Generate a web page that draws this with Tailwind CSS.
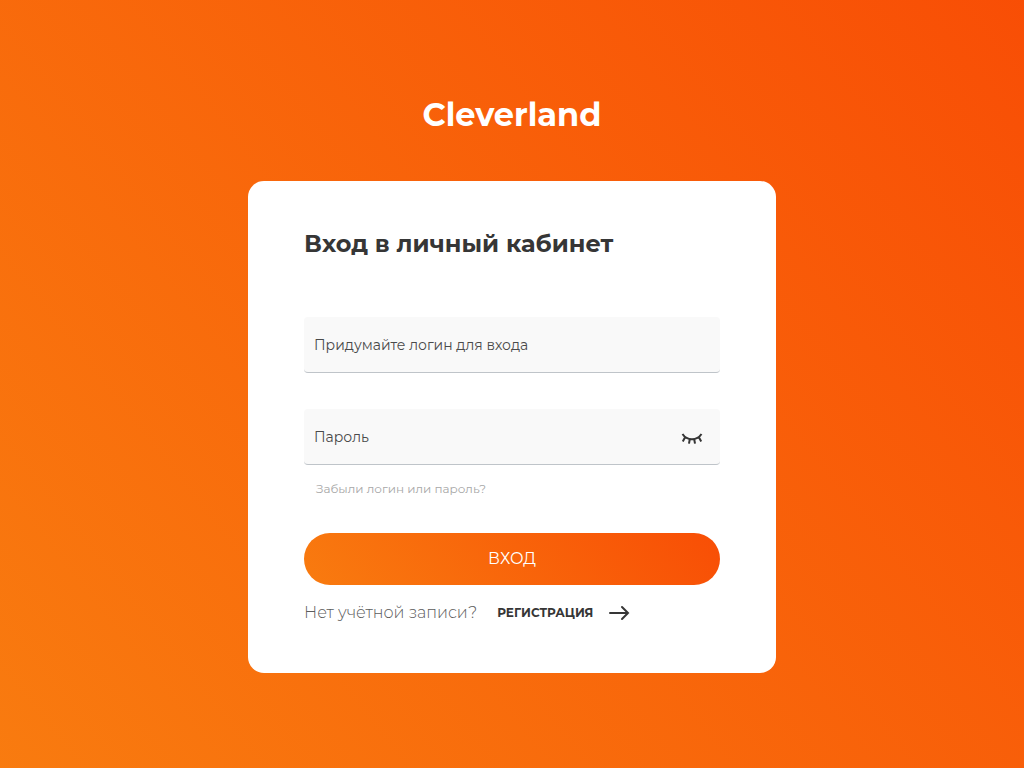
<!DOCTYPE html>
<html lang="ru">
<head>
<meta charset="utf-8">
<meta name="viewport" content="width=device-width, initial-scale=1">
<title>Cleverland</title>
<script src="https://cdn.jsdelivr.net/npm/@tailwindcss/browser@4"></script>
</head>
<body class="font-['Montserrat','Inter','Noto_Sans',sans-serif] text-[#363636]">
<div class="flex min-h-screen flex-col items-center bg-[linear-gradient(231.58deg,#f83600_-53.35%,#f9d423_297.26%)] px-4 pt-24 pb-20">
  <h1 class="text-[32px] leading-[38px] font-bold text-white">Cleverland</h1>
  <main class="mt-[47px] w-full max-w-[528px] rounded-2xl bg-white px-14 pt-12 pb-12">
    <h2 class="text-2xl leading-[30px] font-bold">Вход в личный кабинет</h2>
    <form class="mt-[58px]" onsubmit="return false">
      <input type="text" aria-label="Придумайте логин для входа" placeholder="Придумайте логин для входа" class="block h-14 w-full rounded border-b border-[#bfc4c9] bg-[#f9f9f9] px-[10px] text-sm font-normal outline-none placeholder:text-[#4a4a4a] placeholder:opacity-100">
      <div class="mt-9 flex h-14 items-center rounded border-b border-[#bfc4c9] bg-[#f9f9f9] pr-4 pl-[10px]">
        <input type="password" aria-label="Пароль" placeholder="Пароль" class="h-full min-w-0 flex-1 bg-transparent text-sm font-normal outline-none placeholder:text-[#4a4a4a] placeholder:opacity-100">
        <button type="button" aria-label="Показать пароль" class="flex h-6 w-6 items-center justify-center">
          <svg class="h-6 w-6" viewBox="0 0 24 24" fill="none" stroke="#363636" stroke-width="2"><path d="M2.500 9C7 16 17 16 21.500 9M5.200 12L2.800 16.500M9.800 14L9 18.700M14.200 14L15 18.700M18.800 12L21.200 16.500"/></svg>
        </button>
      </div>
      <a href="#" class="mt-4 ml-3 block w-fit text-xs leading-4 text-[#a7a7a7]">Забыли логин или пароль?</a>
      <button type="submit" class="mt-9 h-[52px] w-full rounded-full bg-[linear-gradient(231.58deg,#f83600_-53.35%,#f9d423_297.26%)] text-base font-normal text-white">ВХОД</button>
    </form>
    <div class="mt-4 flex flex-wrap items-center gap-5">
      <span class="text-base leading-6 font-light text-[#5c5c5c]">Нет учётной записи?</span>
      <a href="#" class="flex items-center gap-3.5 text-xs leading-6 font-bold">РЕГИСТРАЦИЯ
        <svg class="h-6 w-6" viewBox="0 0 24 24" fill="none" stroke="#363636" stroke-width="2" stroke-linecap="round"><path d="M3 12H21M15 6L21 12L15 18"/></svg>
      </a>
    </div>
  </main>
</div>
</body>
</html>
